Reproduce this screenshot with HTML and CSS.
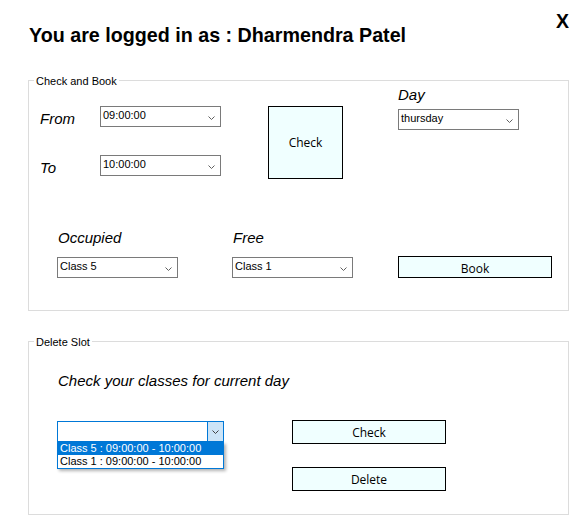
FILE: index.html
```html
<!DOCTYPE html>
<html>
<head>
<meta charset="utf-8">
<link rel="stylesheet" href="styles.css">
</head>
<body>
<div class="app">
  <header class="header">
    <h1 class="title">You are logged in as : Dharmendra Patel</h1>
    <span class="close" role="button">X</span>
  </header>

  <section class="group group-book">
    <span class="legend">Check and Book</span>
    <div class="book-top">
      <div class="times">
        <div class="time-row">
          <span class="lbl lbl-time">From</span>
          <div class="combo w121"><span class="combo-text">09:00:00</span><span class="chev"><svg width="7" height="4" viewBox="0 0 7 4"><polyline points="0.5,0.5 3.5,3.5 6.5,0.5" fill="none" stroke="#606060" stroke-width="1"/></svg></span></div>
        </div>
        <div class="time-row">
          <span class="lbl lbl-time">To</span>
          <div class="combo w121"><span class="combo-text">10:00:00</span><span class="chev"><svg width="7" height="4" viewBox="0 0 7 4"><polyline points="0.5,0.5 3.5,3.5 6.5,0.5" fill="none" stroke="#606060" stroke-width="1"/></svg></span></div>
        </div>
      </div>
      <div class="btn btn-big">Check</div>
      <div class="day">
        <span class="lbl">Day</span>
        <div class="combo w121 day-combo"><span class="combo-text">thursday</span><span class="chev"><svg width="7" height="4" viewBox="0 0 7 4"><polyline points="0.5,0.5 3.5,3.5 6.5,0.5" fill="none" stroke="#606060" stroke-width="1"/></svg></span></div>
      </div>
    </div>
    <div class="book-bottom">
      <div class="field">
        <span class="lbl field-lbl">Occupied</span>
        <div class="combo w121"><span class="combo-text">Class 5</span><span class="chev"><svg width="7" height="4" viewBox="0 0 7 4"><polyline points="0.5,0.5 3.5,3.5 6.5,0.5" fill="none" stroke="#606060" stroke-width="1"/></svg></span></div>
      </div>
      <div class="field field-free">
        <span class="lbl field-lbl">Free</span>
        <div class="combo w121"><span class="combo-text">Class 1</span><span class="chev"><svg width="7" height="4" viewBox="0 0 7 4"><polyline points="0.5,0.5 3.5,3.5 6.5,0.5" fill="none" stroke="#606060" stroke-width="1"/></svg></span></div>
      </div>
      <div class="btn btn-wide btn-book">Book</div>
    </div>
  </section>

  <section class="group group-delete">
    <span class="legend">Delete Slot</span>
    <p class="lbl prompt">Check your classes for current day</p>
    <div class="delete-row">
      <div class="combo combo-open">
        <span class="combo-text"></span>
        <span class="drop-btn"><svg width="7" height="4" viewBox="0 0 7 4"><polyline points="0.5,0.5 3.5,3.5 6.5,0.5" fill="none" stroke="#404040" stroke-width="1"/></svg></span>
        <ul class="drop-list">
          <li class="drop-item selected">Class 5 : 09:00:00 - 10:00:00</li>
          <li class="drop-item">Class 1 : 09:00:00 - 10:00:00</li>
        </ul>
      </div>
      <div class="delete-actions">
        <div class="btn btn-wide btn-tall">Check</div>
        <div class="btn btn-wide btn-tall">Delete</div>
      </div>
    </div>
  </section>
</div>
</body>
</html>
```

FILE: styles.css
```css
* { box-sizing: border-box; }

body {
  margin: 0;
  background: #ffffff;
  color: #000000;
  font-family: "Liberation Sans", Arial, sans-serif;
}

.app {
  width: 569px;
  padding-left: 28px;
}

/* header */
.header {
  display: flex;
  justify-content: space-between;
  align-items: flex-start;
  padding-top: 10px;
  height: 46px;
}

.title {
  margin: 14px 0 0 1px;
  font-size: 19.7px;
  font-weight: 700;
  line-height: 22px;
}

.close {
  font-size: 19.5px;
  font-weight: 700;
  line-height: 22px;
  cursor: pointer;
}

/* group boxes */
.group {
  position: relative;
  border: 1px solid #dcdcdc;
}

.group-book {
  margin-top: 34px;
  padding-bottom: 32px;
}

.group-delete {
  margin-top: 30px;
  padding-bottom: 23px;
}

.legend {
  position: absolute;
  top: -7px;
  left: 5px;
  padding: 0 2px;
  background: #ffffff;
  font-size: 11px;
  line-height: 14px;
}

/* labels */
.lbl {
  font-size: 15px;
  font-style: italic;
  line-height: 17px;
}

/* combos */
.combo {
  position: relative;
  display: flex;
  height: 21px;
  border: 1px solid #7a7a7a;
  background: #ffffff;
}

.w121 { width: 121px; }

.combo-text {
  flex: 1;
  padding: 0 0 2px 2px;
  font-size: 11px;
  line-height: 17px;
  white-space: nowrap;
}

.chev {
  width: 17px;
  display: flex;
  justify-content: center;
  align-items: flex-start;
  padding-top: 9px;
}

.chev svg, .drop-btn svg { display: block; }

/* buttons */
.btn {
  display: flex;
  justify-content: center;
  align-items: center;
  border: 1px solid #000000;
  background: #f0ffff;
  font-family: "Open Sans", "Noto Sans", sans-serif;
  font-size: 12px;
  line-height: 16px;
  cursor: pointer;
}

.btn-big {
  width: 75px;
  height: 73px;
  margin: 20px 0 0 47px;
}

.btn-wide { width: 154px; }

.btn-book {
  height: 22px;
  margin-left: 45px;
  padding-top: 3px;
}

.btn-tall {
  height: 24px;
  padding-top: 1px;
}

/* check and book: top block */
.book-top {
  display: flex;
  align-items: flex-start;
  padding: 5px 0 0 11px;
}

.times {
  display: flex;
  flex-direction: column;
  gap: 28px;
  margin-top: 20px;
}

.time-row {
  display: flex;
  align-items: flex-start;
}

.lbl-time {
  width: 60px;
  margin-top: 4px;
}

.day {
  display: flex;
  flex-direction: column;
  margin-left: 55px;
}

.day-combo { margin-top: 6px; }

/* check and book: bottom block */
.book-bottom {
  display: flex;
  align-items: flex-end;
  margin-top: 50px;
  padding-left: 28px;
}

.field {
  display: flex;
  flex-direction: column;
  width: 121px;
}

.field-lbl {
  padding-left: 1px;
  margin-bottom: 11px;
}

.field-free { margin-left: 54px; }

/* delete slot */
.prompt {
  margin: 0;
  padding: 30px 0 0 29px;
}

.delete-row {
  display: flex;
  align-items: flex-start;
  margin-top: 31px;
  padding-left: 28px;
}

.combo-open {
  width: 167px;
  margin-top: 1px;
  border-color: #0078d7;
}

.drop-btn {
  width: 16px;
  border-left: 1px solid #0078d7;
  background: #cce4f7;
  display: flex;
  justify-content: center;
  align-items: flex-start;
  padding-top: 8px;
}

.drop-list {
  position: absolute;
  top: 20px;
  left: -1px;
  width: 167px;
  margin: 0;
  padding: 0;
  list-style: none;
  background: #ffffff;
  border: 1px solid #0078d7;
  border-top: 0;
  box-shadow: 2px 2px 3px rgba(0, 0, 0, 0.3);
}

.drop-item {
  height: 13px;
  padding-left: 2px;
  font-size: 11px;
  line-height: 13px;
  white-space: nowrap;
}

.drop-item.selected {
  background: #0078d7;
  color: #ffffff;
}

.delete-actions {
  display: flex;
  flex-direction: column;
  gap: 23px;
  margin-left: 68px;
}
```
